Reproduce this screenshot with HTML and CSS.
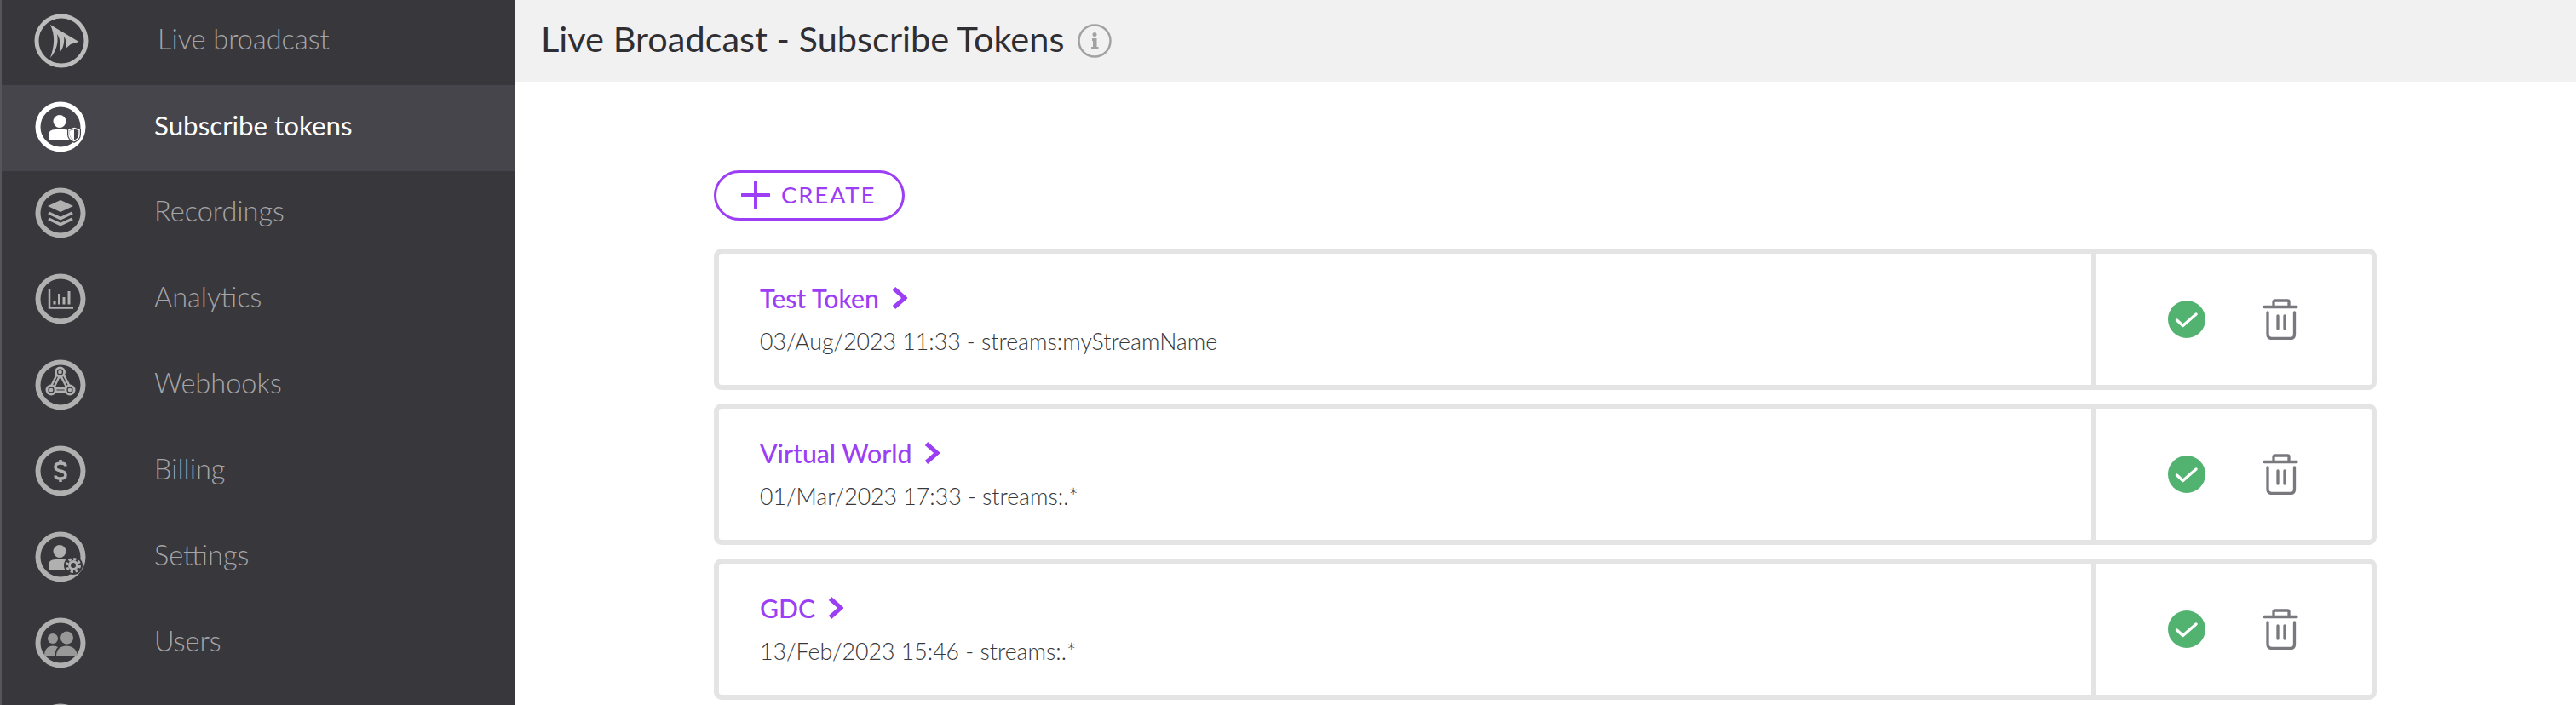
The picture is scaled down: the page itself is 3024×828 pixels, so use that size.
FILE: index.html
```html
<!DOCTYPE html>
<html lang="en">
<head>
<meta charset="utf-8">
<title>Live Broadcast - Subscribe Tokens</title>
<link rel="stylesheet" href="styles.css">
</head>
<body>
<div class="app">
  <nav class="sidebar">
    <a class="nav-item nav-first">
      <svg class="nav-icon logo-icon" viewBox="0 0 64 64"><circle class="ring" cx="32" cy="32" r="29"/><path class="solid" d="M19 13 52.500 33 43 36 37 41C38.500 36 38 31 35 27 36 34 34 41 30 46 31.500 38 31 30 27 24 29 34 26 44 19 52 24 38 25 26 19 13Z"/></svg>
      <span class="nav-label">Live broadcast</span>
    </a>
    <a class="nav-item active">
      <svg class="nav-icon" viewBox="0 0 60 60"><circle class="ring" cx="30" cy="30" r="26.500"/><circle class="solid" cx="29" cy="23.500" r="7.500"/><path class="solid" d="M16 45V40Q16 33 24 33H34Q40 33 42 36V45Z"/><path class="halo" d="M46 29 54 32V39Q54 45 46 49 38 45 38 39V32Z"/><path class="shield" d="M46 31.500 52 33.500V39Q52 44 46 46.500 40 44 40 39V33.500Z"/><path class="solid" d="M46 33 41 34.500V39Q41 43 46 45.500Z"/></svg>
      <span class="nav-label">Subscribe tokens</span>
    </a>
    <a class="nav-item">
      <svg class="nav-icon" viewBox="0 0 60 60"><circle class="ring" cx="30" cy="30" r="26.500"/><path class="solid" d="M30 15 45 22 30 29 15 22Z"/><path class="line" d="M16 30 30 36.500 44 30M16 37 30 43.500 44 37"/></svg>
      <span class="nav-label">Recordings</span>
    </a>
    <a class="nav-item">
      <svg class="nav-icon" viewBox="0 0 60 60"><circle class="ring" cx="30" cy="30" r="26.500"/><path class="thin" d="M17 18V40.500H45"/><path class="bars" d="M23 32V36.500M28.500 24V36.500M34 28V36.500M40 21V36.500"/></svg>
      <span class="nav-label">Analytics</span>
    </a>
    <a class="nav-item">
      <svg class="nav-icon" viewBox="0 0 60 60"><circle class="ring" cx="30" cy="30" r="26.500"/><path class="hook" d="M29.500 14 19 36H41L29.500 14"/><path class="hook-inner" d="M29.500 14 19 36H41L29.500 14"/><circle class="hook-node" cx="29.500" cy="15" r="6.500"/><circle class="hook-node" cx="19" cy="36" r="6.500"/><circle class="hook-node" cx="41" cy="36" r="6.500"/><circle class="hook-core" cx="29.500" cy="15" r="3"/><circle class="hook-core" cx="19" cy="36" r="3"/><circle class="hook-core" cx="41" cy="36" r="3"/></svg>
      <span class="nav-label">Webhooks</span>
    </a>
    <a class="nav-item">
      <svg class="nav-icon" viewBox="0 0 60 60"><circle class="ring" cx="30" cy="30" r="26.500"/><path class="line" d="M36 24.500Q36 21 30 21 24 21 24 25.500 24 29 30 30 36 31 36 35 36 39 30 39 24 39 24 35.500M30 17V21M30 39V43"/></svg>
      <span class="nav-label">Billing</span>
    </a>
    <a class="nav-item">
      <svg class="nav-icon" viewBox="0 0 60 60"><circle class="ring" cx="30" cy="30" r="26.500"/><circle class="solid" cx="29" cy="23.500" r="7.500"/><path class="solid" d="M16 45V40Q16 33 24 33H34Q40 33 42 36V45Z"/><circle class="gear-halo" cx="45" cy="40" r="11"/><circle class="gear-teeth" cx="45" cy="40" r="7.500"/><circle class="gear-ring" cx="45" cy="40" r="4.500"/></svg>
      <span class="nav-label">Settings</span>
    </a>
    <a class="nav-item">
      <svg class="nav-icon" viewBox="0 0 60 60"><circle class="ring" cx="30" cy="30" r="26.500"/><circle class="dim" cx="21" cy="25" r="6"/><circle class="dim" cx="37.500" cy="24" r="7.500"/><path class="dim" d="M11 46Q11 34 21 33.500 25 33.500 27 35 23 39 23 46Z"/><path class="dim" d="M25 46Q25 34 37 33.500 49 34 50 46Z"/></svg>
      <span class="nav-label">Users</span>
    </a>
    <a class="nav-item">
      <svg class="nav-icon" viewBox="0 0 60 60"><circle class="ring" cx="30" cy="30" r="26.500"/></svg>
    </a>
  </nav>

  <main class="content">
    <header class="page-header">
      <h1 class="page-title">Live Broadcast - Subscribe Tokens</h1>
      <svg class="info-icon" viewBox="0 0 40 40"><circle class="info-ring" cx="20" cy="20" r="18.500"/><circle class="info-mark" cx="20" cy="12.500" r="2.500"/><path class="info-mark" d="M17 17H22.500V27H24.500V30H16V27H18V20H17Z"/></svg>
    </header>

    <section class="tokens">
      <button class="create-btn" type="button">
        <svg class="plus-icon" viewBox="0 0 34 32"><path d="M1 16H33M17 1V31"/></svg>
        <span>CREATE</span>
      </button>

      <ul class="token-list">
        <li class="token-card">
          <div class="token-main">
            <a class="token-name">Test Token<svg class="chevron" viewBox="0 0 18 26"><path d="M2.500 2 15 13 2.500 24"/></svg></a>
            <p class="token-meta">03/Aug/2023 11:33 - streams:myStreamName</p>
          </div>
          <div class="token-actions">
            <svg class="status-icon" viewBox="0 0 44 44"><circle class="status-bg" cx="22" cy="22" r="22"/><path class="status-check" d="M10.500 23 17.500 29.500 33 16"/></svg>
            <svg class="trash-icon" viewBox="0 0 44 48"><path d="M2 9.500H40M13 8V3.500Q13 2 14.500 2H29.500Q31 2 31 3.500V8M6 16V41Q6 46.500 11 46.500H33Q37.500 46.500 37.500 41V16M18 20V35M26 20V35"/></svg>
          </div>
        </li>
        <li class="token-card">
          <div class="token-main">
            <a class="token-name">Virtual World<svg class="chevron" viewBox="0 0 18 26"><path d="M2.500 2 15 13 2.500 24"/></svg></a>
            <p class="token-meta">01/Mar/2023 17:33 - streams:.*</p>
          </div>
          <div class="token-actions">
            <svg class="status-icon" viewBox="0 0 44 44"><circle class="status-bg" cx="22" cy="22" r="22"/><path class="status-check" d="M10.500 23 17.500 29.500 33 16"/></svg>
            <svg class="trash-icon" viewBox="0 0 44 48"><path d="M2 9.500H40M13 8V3.500Q13 2 14.500 2H29.500Q31 2 31 3.500V8M6 16V41Q6 46.500 11 46.500H33Q37.500 46.500 37.500 41V16M18 20V35M26 20V35"/></svg>
          </div>
        </li>
        <li class="token-card">
          <div class="token-main">
            <a class="token-name">GDC<svg class="chevron" viewBox="0 0 18 26"><path d="M2.500 2 15 13 2.500 24"/></svg></a>
            <p class="token-meta">13/Feb/2023 15:46 - streams:.*</p>
          </div>
          <div class="token-actions">
            <svg class="status-icon" viewBox="0 0 44 44"><circle class="status-bg" cx="22" cy="22" r="22"/><path class="status-check" d="M10.500 23 17.500 29.500 33 16"/></svg>
            <svg class="trash-icon" viewBox="0 0 44 48"><path d="M2 9.500H40M13 8V3.500Q13 2 14.500 2H29.500Q31 2 31 3.500V8M6 16V41Q6 46.500 11 46.500H33Q37.500 46.500 37.500 41V16M18 20V35M26 20V35"/></svg>
          </div>
        </li>
      </ul>
    </section>
  </main>
</div>
</body>
</html>
```

FILE: styles.css
```css
* { box-sizing: border-box; }

html, body {
  margin: 0;
  height: 100%;
  overflow: hidden;
  background: #fff;
  font-family: "Lato", "Liberation Sans", sans-serif;
}

.app {
  display: flex;
  height: 828px;
  overflow: hidden;
}

/* Sidebar */
.sidebar {
  flex: 0 0 605px;
  height: 828px;
  overflow: hidden;
  background: #38373c;
  border-left: 2px solid #55555a;
  color: #a5a5a7;
  --icon: #b0b0b0;
}

.nav-item {
  display: flex;
  align-items: center;
  height: 101px;
  padding: 0 0 3px 39px;
  color: inherit;
}

.nav-first { margin-top: -1px; }

.nav-item.active {
  background: #46454b;
  color: #fff;
  --icon: #fff;
}

.nav-icon {
  flex: 0 0 60px;
  width: 60px;
  height: 60px;
  margin-right: 80px;
}

.logo-icon {
  flex-basis: 64px;
  width: 64px;
  height: 64px;
  margin: 0 81px 0 -1px;
}

.nav-label {
  margin-bottom: 5px;
  font-size: 32.500px;
  font-weight: 300;
  line-height: 36px;
}

.active .nav-label {
  font-size: 31.300px;
  font-weight: 400;
}

.ring {
  fill: none;
  stroke: var(--icon);
  stroke-width: 6;
}

.logo-icon .ring { stroke-width: 5; stroke: #bcbcbc; }
.logo-icon .solid { fill: #bcbcbc; }

.solid { fill: var(--icon); }
.dim { fill: #989898; }

.line {
  fill: none;
  stroke: var(--icon);
  stroke-width: 3.500;
}

.thin {
  fill: none;
  stroke: var(--icon);
  stroke-width: 2.500;
}

.bars {
  fill: none;
  stroke: var(--icon);
  stroke-width: 3;
}

.halo { fill: #46454b; }

.shield {
  fill: #46454b;
  stroke: var(--icon);
  stroke-width: 1.500;
}

.hook {
  fill: none;
  stroke: var(--icon);
  stroke-width: 6;
}

.hook-inner {
  fill: none;
  stroke: #38373c;
  stroke-width: 1.200;
}

.hook-node { fill: var(--icon); }

.hook-core {
  fill: var(--icon);
  stroke: #38373c;
  stroke-width: 1.300;
}

.gear-halo { fill: #38373c; }

.gear-teeth {
  fill: none;
  stroke: var(--icon);
  stroke-width: 3;
  stroke-dasharray: 3.300 2.590;
}

.gear-ring {
  fill: none;
  stroke: var(--icon);
  stroke-width: 3;
}

/* Content */
.content {
  flex: 1;
  min-width: 0;
  display: flex;
  flex-direction: column;
}

.page-header {
  display: flex;
  align-items: center;
  gap: 16px;
  height: 96px;
  padding-left: 30px;
  background: #f1f1f1;
}

.page-title {
  margin: 0 0 7px;
  font-size: 41.500px;
  font-weight: 400;
  line-height: 48px;
  color: #2f2e33;
}

.info-icon { width: 40px; height: 40px; }

.info-ring {
  fill: none;
  stroke: #a2a2a4;
  stroke-width: 2.500;
}

.info-mark { fill: #a2a2a4; }

.tokens {
  padding: 104px 0 0 233px;
}

.create-btn {
  display: flex;
  align-items: center;
  gap: 13px;
  width: 224px;
  height: 59px;
  padding: 0 0 2px 29px;
  border: 3px solid #9b3ef5;
  border-radius: 30px;
  background: #fff;
  color: #9b3ef5;
  font-family: inherit;
  font-size: 27.500px;
  letter-spacing: 1.800px;
}

.plus-icon {
  width: 34px;
  height: 32px;
  fill: none;
  stroke: #9b3ef5;
  stroke-width: 4;
  stroke-linecap: round;
}

.token-list {
  list-style: none;
  margin: 33px 0 0;
  padding: 0;
  display: flex;
  flex-direction: column;
  gap: 16px;
  width: 1952px;
}

.token-card {
  display: flex;
  height: 166px;
  border: 6px solid #e4e4e4;
  border-radius: 9px;
  background: #fff;
}

.token-main {
  flex: 1;
  min-width: 0;
  padding: 34px 0 0 48px;
}

.token-name {
  display: flex;
  align-items: center;
  gap: 15px;
  height: 36px;
  font-size: 30.200px;
  font-weight: 500;
  color: #9b3ef5;
}

.chevron {
  width: 18px;
  height: 26px;
  fill: none;
  stroke: #9b3ef5;
  stroke-width: 5;
}

.token-meta {
  margin: 18px 0 0;
  font-size: 26.700px;
  font-weight: 300;
  line-height: 30px;
  color: #38383b;
}

.token-actions {
  flex: 0 0 329px;
  display: flex;
  align-items: center;
  justify-content: center;
  gap: 67px;
  border-left: 6px solid #e4e4e4;
}

.status-icon { width: 44px; height: 44px; }
.status-bg { fill: #52b26f; }

.status-check {
  fill: none;
  stroke: #fff;
  stroke-width: 3.500;
  stroke-linecap: round;
  stroke-linejoin: round;
}

.trash-icon {
  width: 44px;
  height: 48px;
  fill: none;
  stroke: #78787e;
  stroke-width: 3.300;
  stroke-linecap: round;
}
```
